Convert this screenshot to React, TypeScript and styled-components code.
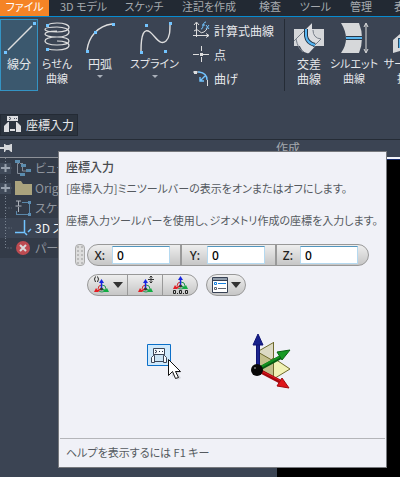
import React from 'react';
import styled, { createGlobalStyle } from 'styled-components';

const GlobalStyle = createGlobalStyle`
  * { box-sizing: border-box; }
  body {
    margin: 0;
    background: #3b4453;
    color: #e6e8eb;
    font: 12px/15px "Noto Sans CJK JP", "Open Sans", sans-serif;
    font-feature-settings: "palt";
  }
  button, input { font: inherit; color: inherit; font-feature-settings: inherit; }
  button { border: 0; padding: 0; background: none; }
  svg { display: block; flex: none; }
`;

const Page = styled.div`
  position: relative;
  display: flex;
  flex-direction: column;
  min-height: 100vh;
  overflow: hidden;
`;

const Tabs = styled.nav`
  display: flex;
  height: 17px;
  background: #222933;
  border-bottom: 1px solid #078bd0;
`;

const Tab = styled.button<{ $w: number; $file?: boolean }>`
  flex: none;
  width: ${p => p.$w}px;
  height: 16px;
  padding-bottom: 4px;
  font-size: 11px;
  line-height: 12px;
  white-space: nowrap;
  color: ${p => (p.$file ? '#fff' : '#a5a9ae')};
  background: ${p => (p.$file ? '#f58426' : 'transparent')};
`;

const Ribbon = styled.section`
  display: flex;
  height: 97px;
  padding-top: 2px;
`;

const Tool = styled.button<{ $w: number; $active?: boolean }>`
  flex: none;
  display: flex;
  flex-direction: column;
  align-items: center;
  width: ${p => p.$w}px;
  height: 72px;
  padding-top: 2px;
  white-space: nowrap;
  border: 1px solid ${p => (p.$active ? '#3494c4' : 'transparent')};
  background: ${p => (p.$active ? '#3b586e' : 'transparent')};
`;

const ToolLabel = styled.span<{ $small?: boolean }>`
  font-size: ${p => (p.$small ? 11 : 12)}px;
  line-height: 15px;
  white-space: pre;
`;

const Caret = styled.span`
  margin-top: 4px;
  border: 3px solid transparent;
  border-top-color: #a9b0ba;
`;

const SmallTools = styled.div`
  flex: none;
  width: 100px;
  padding-left: 8px;
  border-right: 1px solid #252c36;
  height: 72px;
`;

const SmallTool = styled.button`
  display: flex;
  align-items: center;
  gap: 4px;
  height: 24px;
  padding-bottom: 2px;
  white-space: nowrap;
`;

const CoordinateButton = styled.button`
  display: flex;
  align-items: center;
  gap: 5px;
  align-self: flex-start;
  width: 78px;
  height: 22px;
  padding: 0 0 2px 3px;
  white-space: nowrap;
  background: #2c343f;
  border: 1px solid #242b35;
`;

const PanelStrip = styled.div`
  display: flex;
  height: 18px;
  margin-top: 3px;
  border-top: 1px solid #252c36;
  color: #a5a9ae;
`;

const PinArea = styled.div`
  flex: none;
  width: 276px;
  padding-top: 3px;
`;

const Workspace = styled.div`
  display: flex;
  flex: 1;
`;

const Browser = styled.aside`
  flex: none;
  width: 277px;
  border-top: 1px solid #8d9198;
`;

const Tree = styled.ul`
  list-style: none;
  margin: 0;
  padding: 0;
  background: #333b48;
`;

const TreeRow = styled.li<{ $selected?: boolean }>`
  display: flex;
  align-items: center;
  gap: 3px;
  height: 20px;
  padding-bottom: 1px;
  color: ${p => (p.$selected ? '#f2f3f5' : '#8f959e')};
  background: ${p => (p.$selected ? '#3b4453' : 'transparent')};
  white-space: nowrap;
`;

const Canvas = styled.main`
  flex: 1;
  background: #000;
  border-top: 2px solid #f4f5fa;
  box-shadow: inset 0 1px #122666;
`;

const Tooltip = styled.div`
  position: absolute;
  left: 58px;
  right: 13px;
  top: 151px;
  display: flex;
  flex-direction: column;
  color: #555a60;
  background: #f0f1f7;
  border: 1px solid #77797d;
`;

const TipText = styled.div`
  display: flex;
  flex-direction: column;
  padding: 7px 7px 0;
  white-space: nowrap;
`;

const TipTitle = styled.h1`
  margin: 0 0 6px;
  font-size: 12px;
  line-height: 15px;
  font-weight: 500;
  color: #494b4f;
`;

const TipLine = styled.p`
  margin: 0 0 16px;
  font-size: 11px;
  line-height: 16px;
`;

const MiniBar = styled.div`
  display: flex;
  align-items: flex-start;
  padding-left: 16px;
  gap: 2px;
`;

const Grip = styled.span`
  width: 10px;
  height: 22px;
  border: 1px solid #aaa;
  border-radius: 4px;
  background: radial-gradient(circle, #bbb 1px, transparent 1px) 0 0 / 4px 4px, #ddd;
`;

const Capsule = styled.div`
  display: flex;
  height: 22px;
  overflow: hidden;
  border: 1px solid #989898;
  border-radius: 11px;
  background: linear-gradient(#eee, #c6c6c6);
`;

const Field = styled.label<{ $w: number }>`
  display: flex;
  align-items: center;
  justify-content: flex-end;
  gap: 7px;
  width: ${p => p.$w}px;
  padding-right: 10px;
  color: #222;
  font-family: "Noto Sans", sans-serif;
  font-weight: 500;
  & + & { border-left: 2px solid #999; }
`;

const Value = styled.input`
  width: 58px;
  height: 18px;
  padding: 0 4px;
  color: #000;
  background: #fff;
  border: 1px solid #b5d9f0;
  border-top-color: #5396bf;
`;

const ButtonBar = styled.div`
  display: flex;
  gap: 8px;
  padding: 8px 0 0 28px;
`;

const MiniButton = styled.button<{ $w: number }>`
  display: flex;
  align-items: center;
  justify-content: center;
  gap: 3px;
  width: ${p => p.$w}px;
  height: 20px;
  & + & { border-left: 1px solid #999; }
`;

const DropArrow = styled.span`
  border: 5px solid transparent;
  border-top: 6px solid #333;
  border-bottom-width: 0;
`;

const Illustration = styled.div`
  display: flex;
  justify-content: space-between;
  height: 105px;
  margin-top: 37px;
  padding: 0 95px 0 88px;
`;

const Demo = styled.div`
  padding-top: 11px;
`;

const Footer = styled.footer`
  height: 29px;
  margin: 0 1px;
  padding: 6px;
  font-size: 11px;
  border-top: 1px solid #b4b5b9;
`;

const ink = '#dedede';
const blue = '#72c4ff';
type Points = [number, number][];
const Dots = ({ at }: { at: Points }) => (
  <>{at.map(([x, y]) => <rect key={`${x}-${y}`} x={x} y={y} width="3" height="3" fill={blue} />)}</>
);

const LineIcon = () => (
  <svg width="34" height="34" fill="none" stroke={ink} strokeWidth="1.4">
    <path d="M6 28 30 4" /><g stroke="none"><Dots at={[[2, 29], [31, 0]]} /></g>
  </svg>
);
const CoilIcon = () => (
  <svg width="30" height="34" fill="none" stroke={ink} strokeWidth="1.2">
    <path d="M6 3Q8 1 15 1C31 1 31 10 15 10 -1 10 -1 5 15 5 31 5 31 15 15 15-1 15-1 9 15 9M15 15C31 15 31 23 15 23-1 23-1 15 15 15M15 19C31 19 31 28 15 28Q9 28 6 27" />
    <g stroke="none"><Dots at={[[4, 2], [4, 26]]} /></g>
  </svg>
);
const ArcIcon = () => (
  <svg width="30" height="34" fill="none" stroke={ink} strokeWidth="1.4">
    <path d="M2 28C4 14 13 4 27 2" /><g stroke="none"><Dots at={[[1, 28], [9, 9], [27, 1]]} /></g>
  </svg>
);
const SplineIcon = () => (
  <svg width="34" height="34" fill="none" stroke={ink} strokeWidth="1.4">
    <path d="M3 29C3 12 6 6 12 10c6 5 10 14 16 9 4-4 4-10 4-18" />
    <g stroke="none"><Dots at={[[2, 29], [7, 2], [26, 28], [31, 0]]} /></g>
  </svg>
);
const IntersectionIcon = () => (
  <svg width="32" height="34">
    <path d="M1 7h30v17H1z" fill="#d5d7da" />
    <path d="M3 17 19 1v8l9 9-12 13q-4 1-7-3Z" fill="#dcdde0" />
    <path d="M1 19 19 1M20 8q0 8 8 9l-8 8M3 17q2 10 7 13" fill="none" stroke="#777e89" />
    <path d="M13 7v7q1 7 9 9" fill="none" stroke="#243648" strokeWidth="4" />
    <path d="M13 7v7q1 7 9 9" fill="none" stroke="#57b6f3" strokeWidth="2" />
  </svg>
);
const SilhouetteIcon = () => (
  <svg width="32" height="34">
    <path d="M3 1h18q6 15 0 30H3q10-14 0-30Z" fill="#d6d8da" />
    <path d="M8 16h16" stroke="#283848" strokeWidth="4" />
    <path d="M8 16h16" stroke="#59b6ef" strokeWidth="2" />
    <path d="M28 2v28m-2-25 2-4 2 4m-4 22 2 4 2-4" fill="none" stroke={ink} />
  </svg>
);
const SurfaceIcon = () => (
  <svg width="30" height="34">
    <path d="M0 18 7 12V1h22v25H17L0 31Z" fill="#d6d8da" />
    <path d="M6 17h15v8H6z" fill="#d6d8da" stroke="#284c68" strokeWidth="2" />
    <path d="M7 17v8h16" fill="none" stroke="#58b5ee" strokeWidth="2" />
  </svg>
);
const EquationIcon = () => (
  <svg width="17" height="18" fill="none" stroke={ink}>
    <path d="M3.5 2v14M0 14.5h16m-3-2 3 2-3 2M1 4l2.5-3L6 4M1 10q3-3 5 0t5 1 3-4" />
    <path d="M8 8c3 0 1-7 5-7M9 4h3m1 0 3 4m0-4-3 4" stroke={blue} />
  </svg>
);
const PointIcon = () => (
  <svg width="17" height="16" stroke={ink}><path d="M0 8.500h6m4 0h6M8.500 0v5m0 6v5" /><path d="M7 7h3v3H7z" stroke="none" fill={ink} /></svg>
);
const BendIcon = () => (
  <svg width="17" height="18" fill="none">
    <path d="M0 3h5m9.500 8v6" stroke={ink} />
    <path d="M5 3h1q8 1 8 8M7 12l5-5M7 8v4h4" stroke={blue} strokeWidth="1.4" />
    <path d="M1 2h3v3H1z" fill={ink} />
  </svg>
);

const CoordinateIcon = () => (
  <svg width="17" height="17" fill="#dcdde0">
    <path d="M3 0h11v5H3zM0 16v-6l4-4h1v10zM17 16v-6l-4-4h-1v10zM6 13h5v2H6z" />
    <path d="m5 1 2 1.500L5 4M10 2.500h1M12 2.500h1" fill="none" stroke="#4b535f" />
  </svg>
);

const PinIcon = () => <svg width="13" height="10" fill="#d5d7da"><path d="M0 4h4V1h1l1 1h3l2-1h1v8h-1L9 7H6L5 9H4V6H0Z" /></svg>;
const Expander = ({ last = false, plus = false }: { last?: boolean; plus?: boolean }) => (
  <svg width="12" height="20">
    <path d={last ? 'M5.5 0v10H12' : 'M5.5 0v20m0-10H12'} fill="none" stroke="#798390" strokeDasharray="1 2" />
    {plus && <><path d="M0 5h11v11H0z" fill="#404a59" /><path d="M1 10h9M5.500 6v8" stroke="#98a1ad" strokeWidth="2" /></>}
  </svg>
);
const ViewIcon = () => <svg width="17" height="16"><path d="M4 3.500H2.500v10H5m0-10h3M7.500 6v5H11" fill="none" stroke="#858d98" /><path d="M0 0h5v3H0zM6 4h5v3H6zM11 9h5v3h-5zM5 13h5v3H5z" fill="#5c8daf" /></svg>;
const FolderIcon = () => <svg width="17" height="16"><path d="M0 1h6l2 3h9v11H0Z" fill="#aaa37e" /></svg>;
const SketchIcon = () => <svg width="17" height="16" fill="none"><path d="M1 1h5M3.500 1v5m-3 0h6M3.500 7v5" stroke="#adb2b9" /><path d="M1 14.500h14M14.500 14V2M7 2.500h7M1.500 11v4" stroke="#5b87a8" /><path d="M13 1h3v3h-3zM13 13h3v3h-3z" fill="#5d8fb5" /></svg>;
const Sketch3dIcon = () => <svg width="17" height="18" fill="none" stroke={blue}><path d="M9.500 1v12.500H0" strokeWidth="1.5" /><path d="m10 14 2 2m1-3 3-3" strokeWidth="1.5" /></svg>;
const EndIcon = () => <svg width="17" height="16"><circle cx="8" cy="8" r="7" fill="#bd4b51" /><path d="m5 5 6 6m0-6-6 6" stroke="#dadada" strokeWidth="2" /></svg>;

const Triad = ({ y }: { y: number }) => (
  <g transform={`translate(0 ${y})`}>
    <path d="M5 9q0-4 4-4" stroke="#d33232" />
    <path d="M9 5q4 0 4 4 0 3-4 3-3 0-4-2" stroke="#259552" />
    <path d="M8.500 8V2" stroke="#1725e0" strokeWidth="1.5" />
    <path d="m8.500-1 2.500 4H6Z" fill="#1725e0" />
    <path d="m8 9-4 2" stroke="#e12025" strokeWidth="1.500" />
    <path d="m1 12 2-4 3 4Z" fill="#e12025" />
    <path d="m9 9 4 2" stroke="#11ad42" strokeWidth="1.500" />
    <path d="m16 12-2-4-3 4Z" fill="#11ad42" />
    <circle cx="8.500" cy="9" r="1.500" fill="#333" />
  </g>
);
const TriadIcon = ({ mode }: { mode: 'origin' | 'move' | 'zero' }) => (
  <svg width="17" height="18" fill="none">
    <Triad y={mode === 'zero' ? 1 : 4} />
    {mode === 'origin' && <path d="M2.500.5Q.5 3 2.500 6M4.500.5Q6.500 3 4.500 6" stroke="#222" />}
    {mode === 'move' && <path d="M11 3.500h6M14 0v7M12.500 1.500 14 0l1.500 1.500M12.500 5.500 14 7l1.500-1.500" stroke="#333" />}
    {mode === 'zero' && <g stroke="#222"><path d="M1.500 14.500h2v3h-2zM7.500 14.500h2v3h-2zM13.500 14.500h2v3h-2zM5 17.500h1M11 17.500h1" /></g>}
  </svg>
);
const OptionsIcon = () => (
  <svg width="16" height="16" fill="none"><path d="M.5.5h15v15H.5z" fill="#fff" stroke="#374154" /><path d="M1 2h14" stroke="#909caa" strokeWidth="2" /><path d="M1 3.500h14" stroke="#374154" /><path d="M2.500 5.500h2v2h-2zM6 6.500h8" stroke="#1680df" /><path d="M2.500 10.500h2v2h-2zM6 11.500h8" stroke="#606571" /></svg>
);
const CursorPicture = () => (
  <svg width="34" height="38">
    <path d="M.5.5h23v21H.5z" fill="#cfe9fc" stroke="#0b6fc8" />
    <g fill="#f8fbfe" stroke="#3d4657">
      <path d="M6.500 4.500h11v6h-11z" />
      <path d="M6.500 10.500h11v7h-11z" fill="#cde5f5" />
      <path d="M4.500 18.500v-5l2-2h1v7zM19.500 18.500v-5l-2-2h-1v7z" />
      <path d="M8 17.500h8" />
    </g>
    <path d="m8 6 2 1.500L8 9M12 7.500h1M15 7.500h1" fill="none" stroke="#293144" />
    <path d="M25 19v14l3-2 3 5 3-2-3-5h3Z" fill="#a7a9ae" opacity=".35" />
    <path d="M21.500 15.500v16l4-4 3 7 3-1-3-6h5Z" fill="#fff" stroke="#111" />
  </svg>
);
const AxisPicture = () => (
  <svg width="42" height="60">
    <g stroke="#6e6a2c">
      <path d="m10.500 17.500 14-8v35l-14-9Z" fill="#dcdac4" />
      <path d="m8 37 16.500-12L41 36 24.500 46Z" fill="#f1f2b4" />
      <path d="m10.500 20 14 8v16l-14-8Z" fill="#c3c08c" />
      <path d="M24.500 9v36" fill="none" />
    </g>
    <path d="m10 36 22-12" stroke="#075b13" strokeWidth="4" /><path d="m10 35 22-12" stroke="#149020" strokeWidth="2" />
    <path d="m41 17-13 2 5 8Z" fill="#169824" stroke="#086213" />
    <path d="m9 37 23 12" stroke="#a4080e" strokeWidth="4" /><path d="m10 37 22 11" stroke="#e51a20" strokeWidth="1" />
    <path d="m40 55-12-2 5-8Z" fill="#df151b" stroke="#a1090d" />
    <path d="M9 35V8" stroke="#101475" strokeWidth="4" /><path d="M9 35V8" stroke="#2936a7" />
    <path d="m9 1 5 11H4Z" fill="#17218c" stroke="#101475" />
    <circle cx="8" cy="37" r="6" fill="#080808" /><circle cx="6" cy="35" r="1" fill="#777" />
  </svg>
);

export default function App() {
  return (
    <Page>
      <GlobalStyle />
      <Tabs>
        <Tab $w={49} $file>ファイル</Tab><Tab $w={69}>3D モデル</Tab><Tab $w={52}>スケッチ</Tab>
        <Tab $w={78}>注記を作成</Tab><Tab $w={44}>検査</Tab><Tab $w={47}>ツール</Tab>
        <Tab $w={44}>管理</Tab><Tab $w={44}>表示</Tab>
      </Tabs>
      <Ribbon>
        <Tool $w={38} $active><LineIcon /><ToolLabel>線分</ToolLabel></Tool>
        <Tool $w={38}><CoilIcon /><ToolLabel $small>{'らせん\n曲線'}</ToolLabel></Tool>
        <Tool $w={48}><ArcIcon /><ToolLabel>円弧</ToolLabel><Caret /></Tool>
        <Tool $w={61}><SplineIcon /><ToolLabel $small>スプライン</ToolLabel><Caret /></Tool>
        <SmallTools>
          <SmallTool><EquationIcon />計算式曲線</SmallTool>
          <SmallTool><PointIcon />点</SmallTool>
          <SmallTool><BendIcon />曲げ</SmallTool>
        </SmallTools>
        <Tool $w={48}><IntersectionIcon /><ToolLabel>{'交差\n曲線'}</ToolLabel></Tool>
        <Tool $w={42}><SilhouetteIcon /><ToolLabel $small>{'シルエット\n曲線'}</ToolLabel></Tool>
        <Tool $w={66}><SurfaceIcon /><ToolLabel $small>{'サーフェス\n投影'}</ToolLabel></Tool>
      </Ribbon>
      <CoordinateButton><CoordinateIcon />座標入力</CoordinateButton>
      <PanelStrip><PinArea><PinIcon /></PinArea>作成</PanelStrip>
      <Workspace>
        <Browser>
          <Tree>
            <TreeRow><Expander plus /><ViewIcon />ビュー</TreeRow>
            <TreeRow><Expander plus /><FolderIcon />Origin</TreeRow>
            <TreeRow><Expander /><SketchIcon />スケッチ</TreeRow>
            <TreeRow $selected><Expander /><Sketch3dIcon />3D スケッチ</TreeRow>
            <TreeRow><Expander last /><EndIcon />パーツの終端</TreeRow>
          </Tree>
        </Browser>
        <Canvas />
      </Workspace>
      <Tooltip role="tooltip">
        <TipText>
          <TipTitle>座標入力</TipTitle>
          <TipLine>[座標入力]ミニツールバーの表示をオンまたはオフにします。</TipLine>
          <TipLine>座標入力ツールバーを使用し、ジオメトリ作成の座標を入力します。</TipLine>
        </TipText>
        <MiniBar>
          <Grip />
          <Capsule>
            <Field $w={92}>X:<Value defaultValue="0" /></Field>
            <Field $w={95}>Y:<Value defaultValue="0" /></Field>
            <Field $w={93}>Z:<Value defaultValue="0" /></Field>
          </Capsule>
        </MiniBar>
        <ButtonBar>
          <Capsule>
            <MiniButton $w={39} aria-label="原点"><TriadIcon mode="origin" /><DropArrow /></MiniButton>
            <MiniButton $w={35} aria-label="移動"><TriadIcon mode="move" /></MiniButton>
            <MiniButton $w={35} aria-label="座標"><TriadIcon mode="zero" /></MiniButton>
          </Capsule>
          <Capsule><MiniButton $w={38} aria-label="オプション"><OptionsIcon /><DropArrow /></MiniButton></Capsule>
        </ButtonBar>
        <Illustration><Demo><CursorPicture /></Demo><AxisPicture /></Illustration>
        <Footer>ヘルプを表示するには F1 キー</Footer>
      </Tooltip>
    </Page>
  );
}
